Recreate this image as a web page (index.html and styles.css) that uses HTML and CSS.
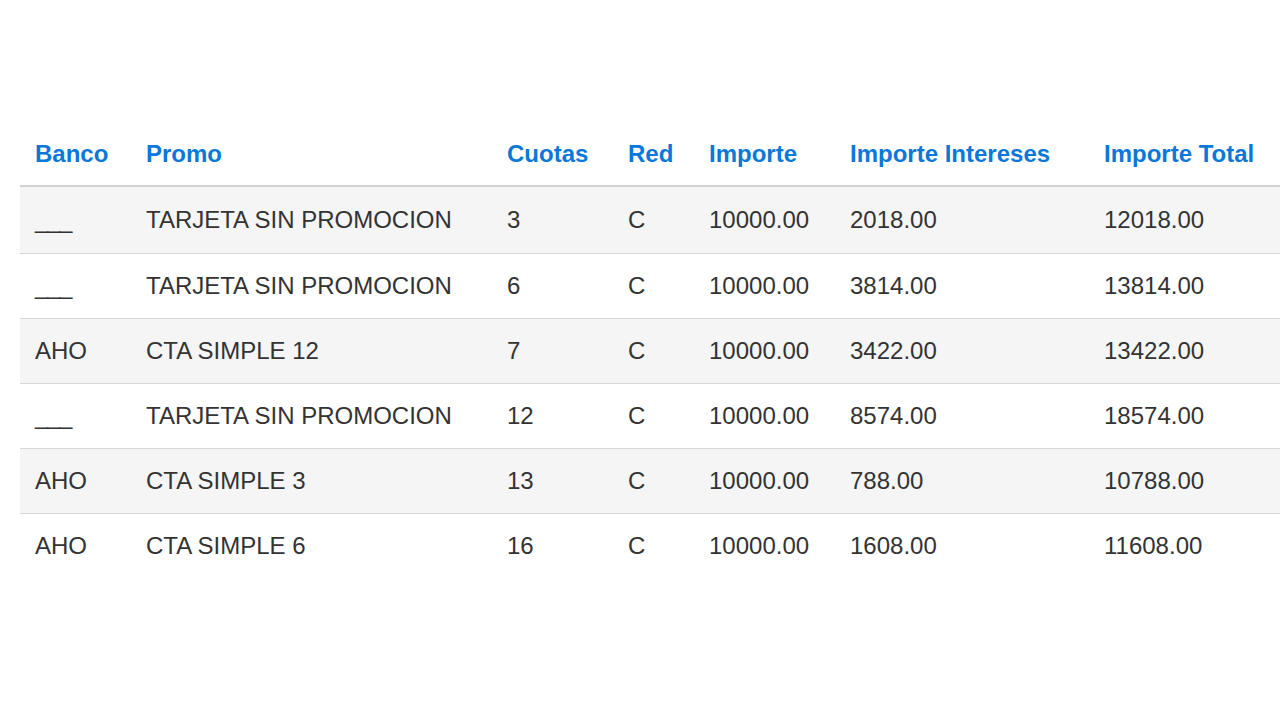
FILE: index.html
```html
<!DOCTYPE html>
<html lang="es">
<head>
<meta charset="utf-8">
<title>Promociones</title>
<link rel="stylesheet" href="styles.css">
</head>
<body>
<div class="page">
<table class="promos">
<colgroup>
<col class="c-banco"><col class="c-promo"><col class="c-cuotas"><col class="c-red"><col class="c-importe"><col class="c-int"><col class="c-total">
</colgroup>
<thead>
<tr><th>Banco</th><th>Promo</th><th>Cuotas</th><th>Red</th><th>Importe</th><th>Importe Intereses</th><th>Importe Total</th></tr>
</thead>
<tbody>
<tr><td><span class="none">___</span></td><td>TARJETA SIN PROMOCION</td><td>3</td><td>C</td><td>10000.00</td><td>2018.00</td><td>12018.00</td></tr>
<tr><td><span class="none">___</span></td><td>TARJETA SIN PROMOCION</td><td>6</td><td>C</td><td>10000.00</td><td>3814.00</td><td>13814.00</td></tr>
<tr><td>AHO</td><td>CTA SIMPLE 12</td><td>7</td><td>C</td><td>10000.00</td><td>3422.00</td><td>13422.00</td></tr>
<tr><td><span class="none">___</span></td><td>TARJETA SIN PROMOCION</td><td>12</td><td>C</td><td>10000.00</td><td>8574.00</td><td>18574.00</td></tr>
<tr><td>AHO</td><td>CTA SIMPLE 3</td><td>13</td><td>C</td><td>10000.00</td><td>788.00</td><td>10788.00</td></tr>
<tr><td>AHO</td><td>CTA SIMPLE 6</td><td>16</td><td>C</td><td>10000.00</td><td>1608.00</td><td>11608.00</td></tr>
</tbody>
</table>
</div>
</body>
</html>
```
FILE: styles.css
```css
html, body {
  margin: 0;
  padding: 0;
  background: #ffffff;
}
body {
  font-family: "Liberation Sans", Arial, sans-serif;
  color: #333333;
}
.page {
  padding: 122px 0 0 20px;
  overflow: hidden;
}
.promos {
  border-collapse: collapse;
  table-layout: fixed;
  width: 1260px;
  font-size: 24px;
}
.c-banco { width: 111px; }
.c-promo { width: 361px; }
.c-cuotas { width: 121px; }
.c-red { width: 81px; }
.c-importe { width: 141px; }
.c-int { width: 254px; }
.c-total { width: 191px; }
.promos th {
  text-align: left;
  color: #0a78d8;
  font-weight: bold;
  height: 63px;
  padding: 0 15px;
  vertical-align: middle;
  border-bottom: 2px solid #d0d0d0;
  white-space: nowrap;
}
.promos td {
  height: 64px;
  padding: 0 15px;
  vertical-align: middle;
  border-top: 1px solid #d8d8d8;
  white-space: nowrap;
}
.promos tbody tr:first-child td {
  border-top: 0;
  height: 66px;
}
.promos tbody tr:nth-child(odd) {
  background: #f5f5f5;
}
.none {
  letter-spacing: -1.3px;
}
```
